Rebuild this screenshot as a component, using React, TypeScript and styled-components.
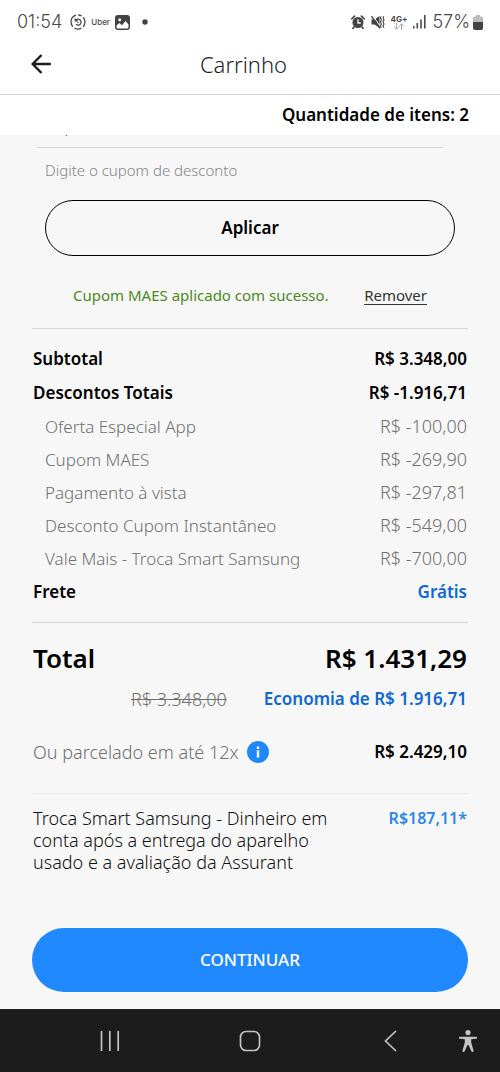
import React from "react";
import styled, { createGlobalStyle, css } from "styled-components";

const GlobalStyle = createGlobalStyle`
  *, *::before, *::after { box-sizing: border-box; }
  body {
    margin: 0;
    background: #f7f7f7;
    color: #000;
    font-family: "Noto Sans", sans-serif;
    font-size: 17px;
    line-height: 22px;
  }
  button, input { font: inherit; color: inherit; }
  h1, p, dl, dd { margin: 0; }
`;

const Page = styled.div`
  display: flex;
  flex-direction: column;
  min-height: 100vh;
`;

const Top = styled.header`
  background: #fff;
`;

const StatusBar = styled.div`
  display: flex;
  align-items: center;
  justify-content: space-between;
  height: 44px;
  padding: 0 17px;
  color: #4a4a4a;
  font-family: Inter, sans-serif;
  font-weight: 300;
  font-size: 18px;
`;

const StatusGroup = styled.div<{ $gap: number }>`
  display: flex;
  align-items: center;
  gap: ${(p) => p.$gap}px;
  svg { display: block; }
`;

const AppLabel = styled.span`
  font-size: 8px;
  font-weight: 500;
`;

const Network = styled.span`
  display: flex;
  flex-direction: column;
  align-items: center;
  font-size: 8px;
  line-height: 8px;
  font-weight: 700;
`;

const TitleBar = styled.div`
  display: grid;
  grid-template-columns: 40px 1fr 40px;
  align-items: center;
  height: 51px;
  padding: 0 34px 10px 21px;
  border-bottom: 1px solid #d6d6d6;
`;

const BackButton = styled.button`
  display: grid;
  place-items: center;
  width: 40px;
  height: 36px;
  padding: 0;
  border: 0;
  background: none;
  svg { display: block; }
`;

const Title = styled.h1`
  color: #252525;
  font-size: 22px;
  line-height: 30px;
  font-weight: 300;
  text-align: center;
`;

const ItemCount = styled.p`
  padding: 9px 31px;
  text-align: right;
  font-weight: 600;
`;

const Content = styled.main`
  flex: 1;
  padding: 0 32px 17px;
`;

const CouponForm = styled.form`
  border-bottom: 1px solid #d6d6d6;
`;

const FieldClip = styled.div`
  display: flex;
  align-items: flex-end;
  height: 13px;
  margin: 0 25px 0 5px;
  overflow: hidden;
`;

const CouponInput = styled.input`
  flex: 1;
  min-width: 0;
  height: 38px;
  padding: 0 8px 5px;
  border: 0;
  border-bottom: 1px solid #d6d6d6;
  background: none;
  color: #333;
  font-size: 16px;
  font-weight: 300;
  outline: none;
`;

const CouponLabel = styled.label`
  display: block;
  margin: 11px 13px 19px;
  color: #858585;
  font-size: 15px;
  font-weight: 300;
`;

const ApplyButton = styled.button`
  display: block;
  width: calc(100% - 26px);
  height: 56px;
  margin: 0 13px;
  border: 1px solid #000;
  border-radius: 28px;
  background: none;
  font-weight: 600;
`;

const CouponStatus = styled.div`
  display: flex;
  justify-content: space-between;
  padding: 28px 41px 22px;
  color: #4a8a1c;
  font-size: 15px;
`;

const RemoveLink = styled.a`
  color: #333;
  text-underline-offset: 3px;
`;

const List = styled.dl`
  padding: 13px 1px;
  border-bottom: 1px solid #d6d6d6;
`;

const Row = styled.div<{ $sub?: boolean }>`
  display: flex;
  justify-content: space-between;
  line-height: 34px;
  font-weight: 600;
  ${(p) =>
    p.$sub &&
    css`
      padding-left: 12px;
      line-height: 33px;
      color: #707070;
      font-weight: 300;
      dd { font-size: 18px; }
    `}
`;

const Value = styled.dd<{ $color?: string }>`
  color: ${(p) => p.$color ?? "inherit"};
`;

const Totals = styled.section`
  padding: 17px 1px 30px;
  border-bottom: 1px solid #ececec;
`;

const TotalRow = styled.div`
  display: flex;
  justify-content: space-between;
  font-size: 26px;
  line-height: 36px;
  font-weight: 600;
`;

const Savings = styled.div`
  display: flex;
  justify-content: flex-end;
  gap: 37px;
  margin-top: 12px;
  color: #1068d4;
  font-weight: 600;
`;

const OldPrice = styled.s`
  color: #707070;
  font-size: 18px;
  font-weight: 300;
`;

const Installments = styled.div`
  display: flex;
  align-items: center;
  margin-top: 31px;
  font-weight: 600;
`;

const InstallmentLabel = styled.span`
  color: #707070;
  font-size: 18px;
  font-weight: 300;
`;

const InfoButton = styled.button`
  display: block;
  width: 22px;
  height: 22px;
  margin: 0 auto 0 8px;
  padding: 0;
  border: 0;
  border-radius: 50%;
  background: #2189ff;
  svg { display: block; }
`;

const TradeIn = styled.section`
  display: flex;
  justify-content: space-between;
  align-items: flex-start;
  padding: 13px 1px 55px;
`;

const TradeInText = styled.p`
  width: 310px;
  color: #111;
  font-size: 18px;
  font-weight: 300;
`;

const TradeInValue = styled.span`
  color: #2b87ea;
  font-size: 16px;
  font-weight: 600;
`;

const ContinueButton = styled.button`
  display: block;
  width: 100%;
  height: 64px;
  border: 0;
  border-radius: 32px;
  background: #2189ff;
  color: #fff;
  font-weight: 500;
`;

const NavBar = styled.nav`
  display: flex;
  align-items: center;
  height: 63px;
  padding: 0 16px 0 48px;
  background: #1c1c1c;
`;

const MainKeys = styled.div`
  display: flex;
  flex: 1;
  gap: 16px;
`;

const NavButton = styled.button<{ $narrow?: boolean }>`
  display: grid;
  place-items: center;
  flex: ${(p) => (p.$narrow ? "0 0 32px" : "1 1 0")};
  height: 48px;
  padding: 0;
  border: 0;
  background: none;
  color: #c4c4c4;
  svg { display: block; }
`;

const rows: { label: string; value: string; sub?: boolean; color?: string }[] = [
  { label: "Subtotal", value: "R$ 3.348,00" },
  { label: "Descontos Totais", value: "R$ -1.916,71" },
  { label: "Oferta Especial App", value: "R$ -100,00", sub: true },
  { label: "Cupom MAES", value: "R$ -269,90", sub: true },
  { label: "Pagamento à vista", value: "R$ -297,81", sub: true },
  { label: "Desconto Cupom Instantâneo", value: "R$ -549,00", sub: true },
  { label: "Vale Mais - Troca Smart Samsung", value: "R$ -700,00", sub: true },
  { label: "Frete", value: "Grátis", color: "#1068d4" },
];

const SyncIcon = () => (
  <svg width="16" height="16" viewBox="0 0 16 16" fill="none" stroke="currentColor" strokeWidth="1.3">
    <path d="M6 1.2A7 7 0 0 0 1 8a7 7 0 0 0 1.8 4.7M4.6 14.1a7 7 0 0 0 6.8 0M13.2 12.7A7 7 0 0 0 15 8a7 7 0 0 0-1.8-4.7M11.6 2a7 7 0 0 0-3.4-1" />
    <path d="M5.600 6.400A3 3 0 1 1 6 10.300M5 4.600l.4 2.300 2.300-.3" />
    <circle cx="8" cy="8.200" r=".8" fill="currentColor" stroke="none" />
  </svg>
);

const PictureIcon = () => (
  <svg width="15" height="15" viewBox="0 0 15 15">
    <rect width="15" height="15" rx="3" fill="#434343" />
    <circle cx="4.700" cy="4.700" r="1.500" fill="#fff" />
    <path d="M1.500 10.500 4.500 8l2.500 2.200L10.500 6l3 3.500V12q0 1.500-1.500 1.500H3q-1.500 0-1.500-1.500z" fill="#fff" />
  </svg>
);

const AlarmIcon = () => (
  <svg width="14" height="14" viewBox="0 0 14 14">
    <circle cx="7" cy="7.500" r="5.500" fill="#434343" />
    <path d="M.8 3.800 3.600 1.100M13.200 3.800 10.400 1.100M3 12l-1.200 1.500M11 12l1.200 1.500" stroke="#434343" strokeWidth="1.600" strokeLinecap="round" />
    <path d="M7 4.300V8h2.800" fill="none" stroke="#fff" strokeWidth="1.300" />
  </svg>
);

const MuteIcon = () => (
  <svg width="14" height="14" viewBox="0 0 14 14">
    <path d="M.5 4.500h3L8.500 1v12L3.500 9.500h-3z" fill="#434343" />
    <path d="M1.800.800 10 12.300" stroke="#fff" strokeWidth="1" />
    <path d="M.4 1.200 9 13.300" stroke="#434343" strokeWidth="1.400" />
    <path d="M10.200 1.200l-.8 1.900 1 1.900-1 2 1 2-1 1.900.8 1.900M12.800 1.200l-.8 1.900 1 1.900-1 2 1 2-1 1.900.8 1.900" fill="none" stroke="#434343" strokeWidth="1.100" />
  </svg>
);

const DataArrows = () => (
  <svg width="12" height="7" viewBox="0 0 12 7" fill="none" stroke="#a5a5a5" strokeWidth="1">
    <path d="M3.500 0v6M1 3.600l2.500 2.600L6 3.600M8.500 7V1M6 3.400 8.500.800 11 3.400" />
  </svg>
);

const SignalIcon = () => (
  <svg width="13" height="14" viewBox="0 0 13 14" fill="#4a4a4a">
    <rect y="11" width="1.500" height="2.500" />
    <rect x="3.500" y="8" width="1.600" height="5.500" />
    <rect x="7.200" y="4.500" width="1.600" height="9" />
    <rect x="11" y="0" width="1.600" height="13.500" />
  </svg>
);

const BatteryIcon = () => (
  <svg width="10" height="15" viewBox="0 0 10 15">
    <path d="M3 0h4v1.500h1.500Q10 1.500 10 3v4H0V3q0-1.500 1.500-1.500H3z" fill="#bdbdbd" />
    <path d="M0 7h10v6q0 2-2 2H2q-2 0-2-2z" fill="#434343" />
  </svg>
);

export default function App() {
  return (
    <Page>
      <GlobalStyle />
      <Top>
        <StatusBar>
          <StatusGroup $gap={8}>
            <span>01:54</span>
            <StatusGroup $gap={5}>
              <SyncIcon />
              <AppLabel>Uber</AppLabel>
              <PictureIcon />
            </StatusGroup>
            <svg width="16" height="6" viewBox="0 0 16 6">
              <circle cx="7" cy="3" r="2.700" fill="#434343" />
            </svg>
          </StatusGroup>
          <StatusGroup $gap={6}>
            <AlarmIcon />
            <MuteIcon />
            <Network>
              4G+
              <DataArrows />
            </Network>
            <SignalIcon />
            <StatusGroup $gap={3}>
              <span>57%</span>
              <BatteryIcon />
            </StatusGroup>
          </StatusGroup>
        </StatusBar>
        <TitleBar>
          <BackButton type="button" aria-label="Voltar">
            <svg width="20" height="20" viewBox="0 0 20 20" fill="none" stroke="#1c1c1c" strokeWidth="2.400">
              <path d="M19.800 10H1.700M10.500 1 1.700 10l8.800 9" />
            </svg>
          </BackButton>
          <Title>Carrinho</Title>
        </TitleBar>
        <ItemCount>Quantidade de itens: 2</ItemCount>
      </Top>

      <Content>
        <CouponForm onSubmit={(e) => e.preventDefault()}>
          <FieldClip>
            <CouponInput id="coupon" defaultValue="Cupom" />
          </FieldClip>
          <CouponLabel htmlFor="coupon">Digite o cupom de desconto</CouponLabel>
          <ApplyButton type="submit">Aplicar</ApplyButton>
          <CouponStatus>
            <span>Cupom MAES aplicado com sucesso.</span>
            <RemoveLink href="#remover">Remover</RemoveLink>
          </CouponStatus>
        </CouponForm>

        <List>
          {rows.map((row) => (
            <Row key={row.label} $sub={row.sub}>
              <dt>{row.label}</dt>
              <Value $color={row.color}>{row.value}</Value>
            </Row>
          ))}
        </List>

        <Totals>
          <TotalRow>
            <span>Total</span>
            <span>R$ 1.431,29</span>
          </TotalRow>
          <Savings>
            <OldPrice>R$ 3.348,00</OldPrice>
            <span>Economia de R$ 1.916,71</span>
          </Savings>
          <Installments>
            <InstallmentLabel>Ou parcelado em até 12x</InstallmentLabel>
            <InfoButton type="button" aria-label="Informações">
              <svg width="22" height="22" viewBox="0 0 22 22" fill="#fff">
                <rect x="9.800" y="5.500" width="2.400" height="2.400" />
                <rect x="9.800" y="9.300" width="2.400" height="7.200" />
              </svg>
            </InfoButton>
            <span>R$ 2.429,10</span>
          </Installments>
        </Totals>

        <TradeIn>
          <TradeInText>
            Troca Smart Samsung - Dinheiro em conta após a entrega do aparelho usado e a avaliação da Assurant
          </TradeInText>
          <TradeInValue>R$187,11*</TradeInValue>
        </TradeIn>

        <ContinueButton type="button">CONTINUAR</ContinueButton>
      </Content>

      <NavBar>
        <MainKeys>
          <NavButton type="button" aria-label="Recentes">
            <svg width="20" height="20" viewBox="0 0 20 20" stroke="currentColor" strokeWidth="1.700">
              <path d="M1.500 0v20M9.800 0v20M18.200 0v20" />
            </svg>
          </NavButton>
          <NavButton type="button" aria-label="Início">
            <svg width="22" height="22" viewBox="0 0 22 22" fill="none" stroke="currentColor" strokeWidth="1.700">
              <rect x="1.500" y="1.500" width="19" height="19" rx="5.500" />
            </svg>
          </NavButton>
          <NavButton type="button" aria-label="Voltar">
            <svg width="13" height="22" viewBox="0 0 13 22" fill="none" stroke="currentColor" strokeWidth="1.700">
              <path d="M12 1 1.500 11 12 21" />
            </svg>
          </NavButton>
        </MainKeys>
        <NavButton type="button" aria-label="Acessibilidade" $narrow>
          <svg width="18" height="22" viewBox="0 0 18 22" fill="currentColor">
            <circle cx="9" cy="2.600" r="2.600" />
            <path d="M1 6.700h16a1 1 0 0 1 0 2.100l-4.800.5v3.200l2.300 8a1.100 1.100 0 0 1-2.100.7L9.500 15h-1l-2.900 6.200a1.100 1.100 0 0 1-2.100-.7l2.300-8V9.300L1 8.800a1 1 0 0 1 0-2.100z" />
          </svg>
        </NavButton>
      </NavBar>
    </Page>
  );
}
